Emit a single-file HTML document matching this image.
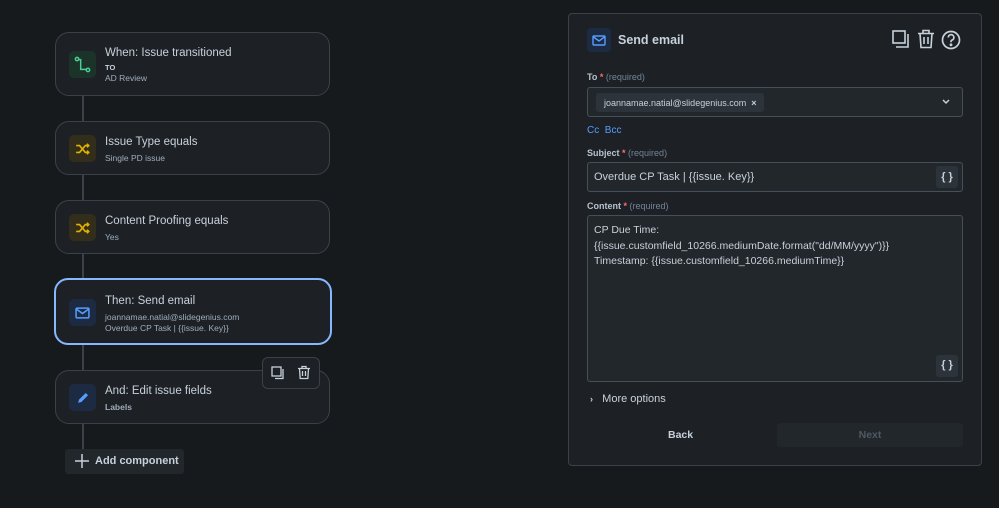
<!DOCTYPE html>
<html><head><meta charset="utf-8"><style>
*{box-sizing:border-box;margin:0;padding:0}
body{width:999px;height:508px;background:#161a1d;font-family:"Liberation Sans",sans-serif;color:#b6c2cf;position:relative;overflow:hidden}
.abs{position:absolute}
.line{position:absolute;left:82px;width:2px;background:#3b4148}
.card{position:absolute;left:55px;width:275px;background:#1d2125;border:1px solid #3b4148;border-radius:14px}
.ic{position:absolute;left:13px;width:27px;height:27px;border-radius:5px;display:flex;align-items:center;justify-content:center}
.t{position:absolute;left:49px;font-size:11.5px;color:#c7d1db;white-space:nowrap}
.s{position:absolute;left:49px;font-size:8.5px;color:#9fadbc;white-space:nowrap}
.lbl{position:absolute;left:587px;font-size:9px;color:#b6c2cf;font-weight:bold}
.lbl span.r{color:#f87168}.lbl span.q{color:#738496;font-weight:normal}
.inp{position:absolute;left:587px;width:376px;background:#22272b;border:1px solid #454f59;border-radius:3px}
.br{position:absolute;right:4px;width:22px;height:22px;background:#2c333a;border-radius:3px;font-size:11px;color:#c7d1db;display:flex;align-items:center;justify-content:center;font-weight:bold}
</style></head><body>
<div class="line" style="top:95px;height:355px"></div>

<div class="card" style="top:32px;height:64px">
<div class="ic" style="top:18px;background:#1c3329"><svg width="17" height="17" viewBox="0 0 14 14" fill="none" stroke="#4bce97" stroke-width="1.2"><circle cx="2.5" cy="2.5" r="1.4"/><circle cx="11.5" cy="11.5" r="1.4"/><path d="M3.8 3 H5.5 V11 H10"/></svg></div>
<div class="t" style="top:14px">When: Issue transitioned</div>
<div class="s" style="top:30px;font-weight:bold;font-size:7.5px;color:#c7d1db">TO</div>
<div class="s" style="top:40px">AD Review</div></div>

<div class="card" style="top:121px;height:54px">
<div class="ic" style="top:13px;background:#332e1b"><svg width="16" height="14" viewBox="0 0 14 12" fill="none" stroke="#e2b203" stroke-width="1.4"><path d="M1 3h3l5 6h3M1 9h3l5-6h3M10.5 1.5 12 3l-1.5 1.5M10.5 7.5 12 9l-1.5 1.5"/></svg></div>
<div class="t" style="top:14px">Issue Type equals</div>
<div class="s" style="top:31px">Single PD issue</div></div>

<div class="card" style="top:200px;height:54px">
<div class="ic" style="top:13px;background:#332e1b"><svg width="16" height="14" viewBox="0 0 14 12" fill="none" stroke="#e2b203" stroke-width="1.4"><path d="M1 3h3l5 6h3M1 9h3l5-6h3M10.5 1.5 12 3l-1.5 1.5M10.5 7.5 12 9l-1.5 1.5"/></svg></div>
<div class="t" style="top:14px">Content Proofing equals</div>
<div class="s" style="top:31px">Yes</div></div>

<div class="card" style="top:278px;height:67px;border:2px solid #85b8ff;left:54px;width:278px">
<div class="ic" style="top:19px;background:#1c2b41"><svg width="15" height="12" viewBox="0 0 14 11" fill="none" stroke="#579dff" stroke-width="1.4"><rect x="1" y="1" width="12" height="9" rx="1"/><path d="M1.5 2l5.5 4 5.5-4"/></svg></div>
<div class="t" style="top:15px">Then: Send email</div>
<div class="s" style="top:32px">joannamae.natial@slidegenius.com</div>
<div class="s" style="top:43px">Overdue CP Task | {{issue. Key}}</div></div>

<div class="card" style="top:370px;height:54px">
<div class="ic" style="top:13px;background:#1c2b41"><svg width="14" height="14" viewBox="0 0 13 13"><path d="M2 11l.8-3L9 1.8l2.2 2.2L5 10.2z" fill="#579dff"/></svg></div>
<div class="t" style="top:14px">And: Edit issue fields</div>
<div class="s" style="top:31px;font-weight:bold">Labels</div></div>

<div class="abs" style="left:262px;top:357px;width:58px;height:32px;background:#1d2125;border:1px solid #3b4148;border-radius:6px">
<svg class="abs" style="left:8px;top:8px" width="14" height="14" viewBox="0 0 14 14" fill="none" stroke="#c7d1db" stroke-width="1.3"><rect x="1" y="1" width="9" height="9"/><path d="M12 3v9.5H4"/></svg>
<svg class="abs" style="left:34px;top:7px" width="14" height="15" viewBox="0 0 14 15" fill="none" stroke="#c7d1db" stroke-width="1.3"><path d="M1 3.5h12M5 3.5V1.5h4v2M2.5 3.5l.7 10h7.6l.7-10M5.5 6v5M8.5 6v5"/></svg></div>

<div class="abs" style="left:65px;top:449px;width:119px;height:25px;background:#22272b;border-radius:3px;font-size:11px;font-weight:bold;color:#c7d1db;padding:6px 0 0 30px">Add component</div>
<svg class="abs" style="left:75px;top:454px" width="14" height="14" viewBox="0 0 14 14" stroke="#c7d1db" stroke-width="1.5"><path d="M7 0v14M0 7h14"/></svg>

<div class="abs" style="left:568px;top:13px;width:414px;height:453px;background:#1d2125;border:1px solid #3b4148;border-radius:4px"></div>
<div class="abs" style="left:587px;top:28px;width:24px;height:24px;background:#1c2b41;border-radius:4px;display:flex;align-items:center;justify-content:center"><svg width="14" height="11" viewBox="0 0 14 11" fill="none" stroke="#579dff" stroke-width="1.4"><rect x="1" y="1" width="12" height="9" rx="1"/><path d="M1.5 2l5.5 4 5.5-4"/></svg></div>
<div class="abs" style="left:618px;top:33px;font-size:12.5px;font-weight:bold;color:#c7d1db">Send email</div>
<svg class="abs" style="left:892px;top:30px" width="18" height="19" viewBox="0 0 18 19" fill="none" stroke="#c7d1db" stroke-width="1.6"><rect x="1" y="1" width="12" height="12"/><path d="M16 4v13H4"/></svg>
<svg class="abs" style="left:917px;top:29px" width="18" height="20" viewBox="0 0 18 20" fill="none" stroke="#c7d1db" stroke-width="1.6"><path d="M1 4.5h16M6 4.5V1.5h6v3M3 4.5l1 14h10l1-14M7 8v7M11 8v7"/></svg>
<svg class="abs" style="left:941px;top:30px" width="20" height="20" viewBox="0 0 20 20" fill="none" stroke="#c7d1db" stroke-width="1.7"><circle cx="10" cy="10" r="8.5"/><path d="M7.3 7.5a2.8 2.8 0 1 1 3.7 2.6c-.7.3-1 .8-1 1.5v.7"/><circle cx="10" cy="14.8" r=".6" fill="#c7d1db"/></svg>

<div class="lbl" style="top:72px">To <span class="r">*</span> <span class="q">(required)</span></div>
<div class="inp" style="top:87px;height:30px">
<div class="abs" style="left:8px;top:5px;height:19px;width:168px;background:#2c333a;border-radius:3px;font-size:9px;color:#c7d1db;padding:5px 0 0 8px">joannamae.natial@slidegenius.com &nbsp;<b>×</b></div>
<svg class="abs" style="right:12px;top:11px" width="8" height="6" viewBox="0 0 8 6" fill="none" stroke="#c7d1db" stroke-width="1.5"><path d="M1 1l3 3 3-3"/></svg></div>
<div class="abs" style="left:587px;top:125px;font-size:10px;color:#579dff">Cc &nbsp;Bcc</div>

<div class="lbl" style="top:148px">Subject <span class="r">*</span> <span class="q">(required)</span></div>
<div class="inp" style="top:162px;height:30px;font-size:11px;color:#c7d1db;padding:8px 0 0 6px">Overdue CP Task | {{issue. Key}}<div class="br" style="top:3px">{ }</div></div>

<div class="lbl" style="top:201px">Content <span class="r">*</span> <span class="q">(required)</span></div>
<div class="inp" style="top:215px;height:167px;font-size:10.5px;color:#c7d1db;padding:7px 0 0 6px;line-height:15.5px">CP Due Time:<br>{{issue.customfield_10266.mediumDate.format("dd/MM/yyyy")}}<br>Timestamp: {{issue.customfield_10266.mediumTime}}<div class="br" style="bottom:4px">{ }</div></div>

<div class="abs" style="left:590px;top:393px;font-size:11px;color:#c7d1db"><b style="font-size:9px">›</b> &nbsp; More options</div>
<div class="abs" style="left:668px;top:429px;font-size:10.5px;font-weight:bold;color:#c7d1db">Back</div>
<div class="abs" style="left:777px;top:423px;width:186px;height:24px;background:#22272b;border-radius:3px;font-size:10.5px;font-weight:bold;color:#4f5962;text-align:center;padding-top:6px">Next</div>
</body></html>
